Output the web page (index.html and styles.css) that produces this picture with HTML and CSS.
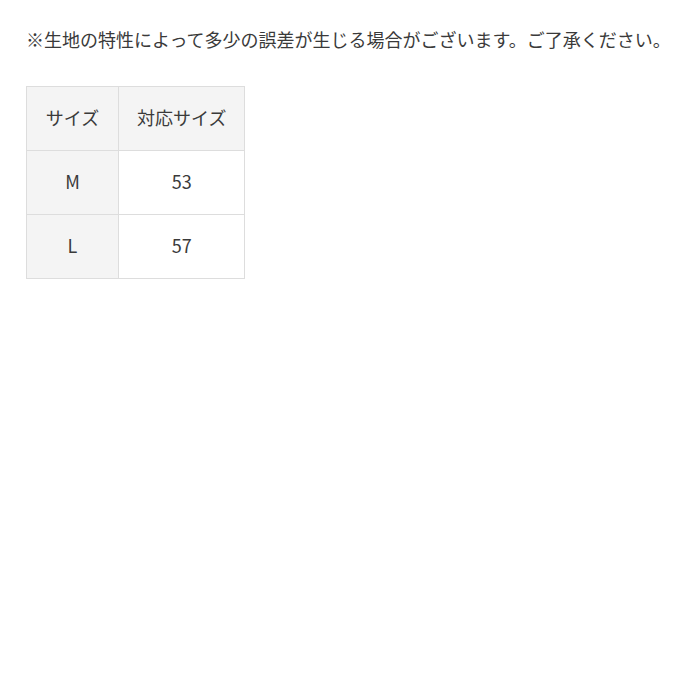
FILE: index.html
```html
<!DOCTYPE html>
<html lang="ja">
    <head>
        <meta charset="UTF-8" />
        <title>サイズ表</title>
        <link rel="stylesheet" href="styles.css">
    </head>
    <body>

        <div class="size-info">
            <p class="note">※生地の特性によって多少の誤差が生じる場合がございます。ご了承ください。</p>

            <table class="size-table">
                <tr>
                    <th class="size-name">サイズ</th>
                    <th>対応サイズ</th>
                </tr>
                <tr>
                    <th class="size-name">M</th>
                    <td>53</td>
                </tr>
                <tr>
                    <th class="size-name">L</th>
                    <td>57</td>
                </tr>
            </table>
        </div>

    </body>
</html>
```

FILE: styles.css
```css
body {
    margin: 0;
    font-family: "Noto Sans CJK JP", "Noto Sans", sans-serif;
    background-color: #FFFFFF;
    color: #3A3A3A;
}

.size-info {
    padding: 26px 26px;
}

.note {
    margin: 0;
    font-size: 18px;
    line-height: 27px;
    white-space: nowrap;
}

.size-table {
    margin-top: 33px;
    border-collapse: collapse;
}

.size-table th,
.size-table td {
    padding: 17px 18px 19px;
    border: 1px solid #DDDDDD;
    font-size: 18px;
    font-weight: normal;
    line-height: 27px;
    text-align: center;
}

.size-table th {
    background-color: #F4F4F4;
}

.size-table .size-name {
    width: 55px;
}

.size-table td {
    background-color: #FFFFFF;
}
```
